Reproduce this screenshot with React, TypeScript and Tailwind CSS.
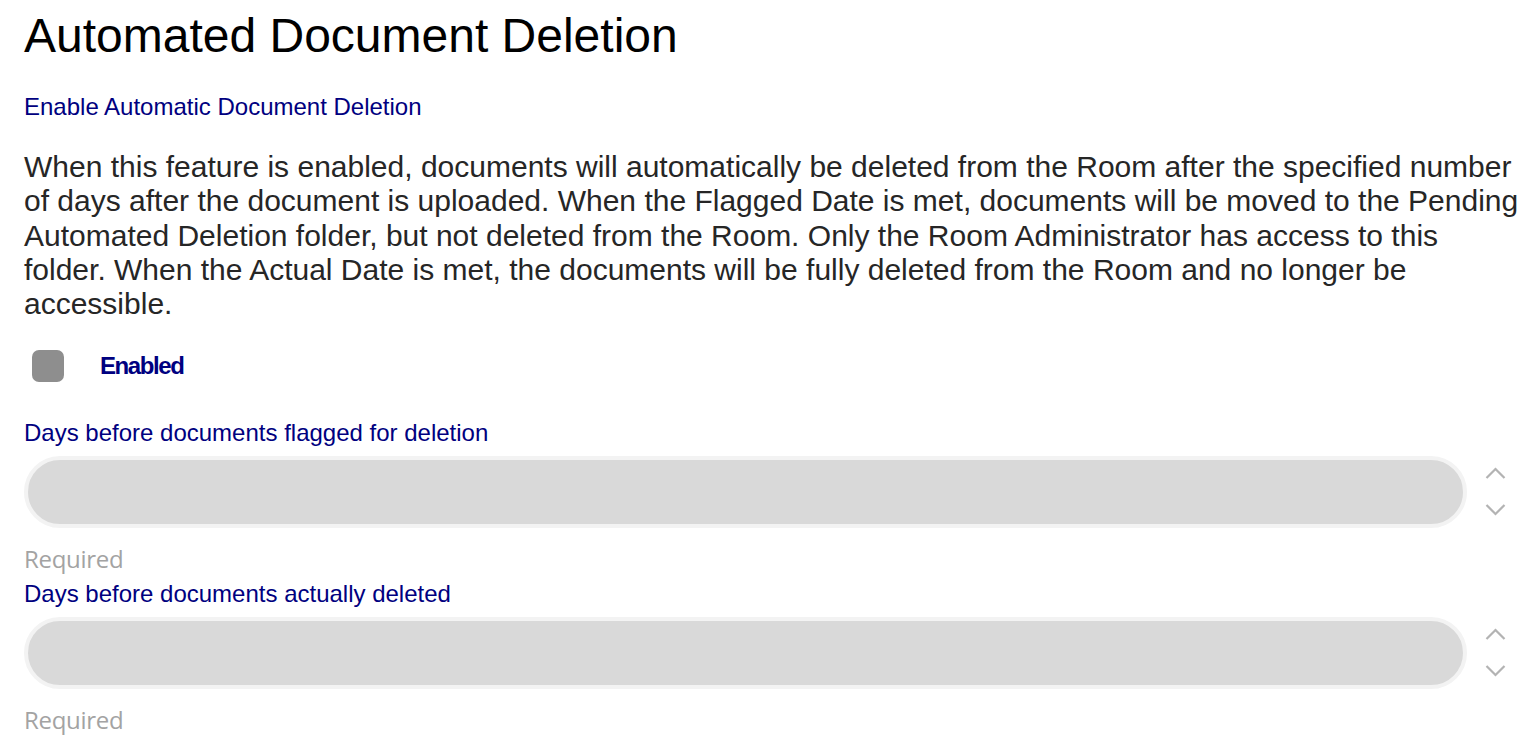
import React from "react";

const Chevrons = () => (
  <div className="flex w-[56px] shrink-0 flex-col items-center justify-center gap-[25px] pb-[2px]">
    <svg width="21" height="12" viewBox="0 0 21 12" fill="none">
      <path d="M1.5 11 L10.5 2 L19.5 11" stroke="#b3b3b3" strokeWidth="2.2" />
    </svg>
    <svg width="21" height="12" viewBox="0 0 21 12" fill="none">
      <path d="M1.5 1 L10.5 10 L19.5 1" stroke="#b3b3b3" strokeWidth="2.2" />
    </svg>
  </div>
);

const NumberField = ({ label }: { label: string }) => (
  <div className="flex flex-col">
    <label className="text-[24px] leading-[28px] text-[#000080]">{label}</label>
    <div className="mt-[9px] flex">
      <div className="h-[72px] flex-1 rounded-full border-[4px] border-[#f3f3f3] bg-[#d9d9d9]" />
      <Chevrons />
    </div>
    <div
      className="mt-[17px] text-[24px] leading-[28px] text-[#a3a3a3]"
      style={{ fontFamily: '"Open Sans", sans-serif' }}
    >
      <span className="tracking-[-0.3px]">Required</span>
    </div>
  </div>
);

export default function App() {
  return (
    <div
      className="min-h-[746px] w-full bg-white pl-[24px] pr-[14px] pt-[8px]"
      style={{ fontFamily: '"Liberation Sans", Arial, sans-serif' }}
    >
      <h1 className="text-[48px] font-normal leading-[56px] text-black">Automated Document Deletion</h1>
      <div className="mt-[29px] text-[24px] leading-[28px] text-[#000080]">Enable Automatic Document Deletion</div>
      <p className="mt-[29px] text-[30px] leading-[34.3px] text-[#262626]">
        When this feature is enabled, documents will automatically be deleted from the Room after the specified number of
        days after the document is uploaded. When the Flagged Date is met, documents will be moved to the Pending
        Automated Deletion folder, but not deleted from the Room. Only the Room Administrator has access to this folder.
        When the Actual Date is met, the documents will be fully deleted from the Room and no longer be accessible.
      </p>
      <div className="mt-[29px] flex items-center">
        <div className="ml-[8px] h-[32px] w-[32px] rounded-[7px] bg-[#8e8e8e]" />
        <span className="ml-[36px] text-[24px] font-bold leading-[28px] tracking-[-1.4px] text-[#000080]">Enabled</span>
      </div>
      <div className="mt-[37px]">
        <NumberField label="Days before documents flagged for deletion" />
      </div>
      <div className="mt-[7px]">
        <NumberField label="Days before documents actually deleted" />
      </div>
    </div>
  );
}
